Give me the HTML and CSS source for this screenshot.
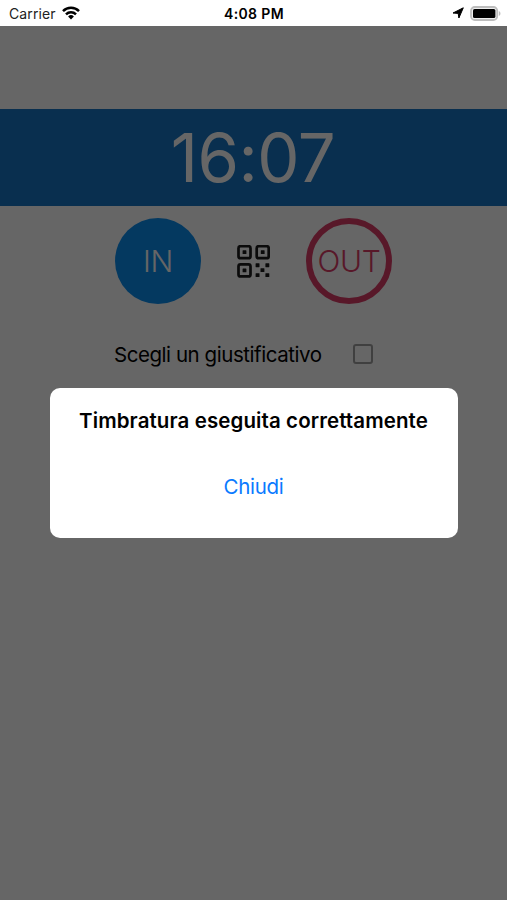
FILE: index.html
```html
<!DOCTYPE html>
<html lang="it">
	<head>
		<meta charset="UTF-8" />
		<meta name="viewport" content="width=device-width, initial-scale=1.0" />
		<title>Timbratura</title>
		<link rel="stylesheet" href="styles.css">
	</head>
	<body>
		<header class="status-bar">
			<div class="status-left">
				<span class="carrier">Carrier</span>
				<svg class="wifi" width="18" height="14" viewBox="0 0 18 14">
					<g fill="none" stroke="#000" stroke-width="2.5">
						<path d="M1 5.1a11.3 11.3 0 0 1 16 0" />
						<path d="M4 8.3a7.1 7.1 0 0 1 10 0" />
					</g>
					<path d="M6.1 10.4a4.1 4.1 0 0 1 5.8 0L9 13.6z" />
				</svg>
			</div>
			<div class="status-time">4:08 PM</div>
			<div class="status-right">
				<svg width="12" height="12" viewBox="0 0 12 12">
					<path d="M11.3.8 6.9 11 6.2 6.4 1 6z" stroke="#000" stroke-linejoin="round" />
				</svg>
				<svg width="31" height="15" viewBox="0 0 31 15">
					<rect x="1" y="1" width="26.2" height="13" rx="3.8" fill="#eee" stroke="#bdbdbd" stroke-width="1.8" />
					<rect x="3" y="3" width="22.4" height="9" rx="1.6" />
					<path d="M28.8 5v5c2.2-.7 2.2-4.3 0-5z" fill="#bdbdbd" />
				</svg>
			</div>
		</header>

		<main class="screen">
			<div class="clock"><span>16:07</span></div>

			<div class="actions">
				<button class="round in">IN</button>
				<svg class="qr" width="33" height="33" viewBox="0 0 33 33" fill="#1c1c1c">
					<g fill="none" stroke="#1c1c1c" stroke-width="2.7">
						<rect x="1.5" y="1.2" width="12" height="12" rx="2" />
						<rect x="19.7" y="1.2" width="12" height="12" rx="2" />
						<rect x="1.5" y="19.4" width="12" height="12" rx="2" />
					</g>
					<rect x="5.6" y="5.3" width="3.8" height="3.8" rx=".4" />
					<rect x="23.8" y="5.3" width="3.8" height="3.8" rx=".4" />
					<rect x="5.6" y="23.5" width="3.8" height="3.8" rx=".4" />
					<rect x="18.6" y="18.3" width="3.9" height="3.9" rx=".4" />
					<rect x="28.4" y="18.3" width="3.9" height="3.9" rx=".4" />
					<rect x="23.5" y="23.2" width="3.9" height="3.9" rx=".4" />
					<rect x="18.6" y="28.2" width="3.9" height="3.9" rx=".4" />
					<rect x="28.4" y="28.2" width="3.9" height="3.9" rx=".4" />
				</svg>
				<button class="round out">OUT</button>
			</div>

			<div class="reason">
				<span class="reason-label">Scegli un giustificativo</span>
				<span class="checkbox"></span>
			</div>

			<div class="overlay">
				<div class="dialog">
					<h3>Timbratura eseguita correttamente</h3>
					<button class="close">Chiudi</button>
				</div>
			</div>
		</main>
	</body>
</html>
```

FILE: styles.css
```css
body {
	margin: 0;
	height: 900px;
	display: flex;
	flex-direction: column;
	overflow: hidden;
	background-color: white;
	color: black;
	font-family: Inter, "Liberation Sans", sans-serif;
}
button {
	margin: 0;
	padding: 0;
	border: none;
	background: none;
	font-family: inherit;
	cursor: pointer;
}
.status-bar {
	height: 25.5px;
	flex: none;
	display: grid;
	grid-template-columns: 1fr auto 1fr;
	align-items: center;
	padding: 1px 6px 0 9px;
	box-sizing: border-box;
	font-size: 14px;
}
.status-left {
	display: flex;
	align-items: center;
	gap: 6px;
}
.carrier {
	color: #222;
	letter-spacing: 0.1px;
}
.status-time {
	padding: 1px 2px 0 0;
	font-weight: 600;
	font-size: 14px;
	letter-spacing: 0.35px;
}
.status-right {
	display: flex;
	justify-content: flex-end;
	align-items: center;
	gap: 6px;
}
.screen {
	position: relative;
	flex: 1;
	padding-top: 83px;
	box-sizing: border-box;
}
.clock {
	height: 97.5px;
	display: flex;
	justify-content: center;
	align-items: center;
	padding-right: 1px;
	background-color: #1777c6;
	color: white;
	font-size: 67px;
	font-weight: 400;
	letter-spacing: -0.5px;
}
.actions {
	display: flex;
	justify-content: center;
	align-items: center;
	gap: 36px;
	padding-top: 12px;
}
.round {
	width: 86px;
	height: 86px;
	box-sizing: border-box;
	border-radius: 50%;
	font-size: 30px;
	font-weight: 300;
	letter-spacing: -0.3px;
}
.in {
	background-color: #0c8ef0;
	color: white;
}
.out {
	border: 6px solid #dc3e68;
	color: #dc3e68;
}
.reason {
	display: flex;
	align-items: center;
	justify-content: space-between;
	width: 259px;
	margin: 38px 0 0 114px;
}
.reason-label {
	padding-top: 2px;
	font-size: 20.5px;
	line-height: 22px;
	letter-spacing: -0.45px;
}
.checkbox {
	width: 20px;
	height: 20px;
	box-sizing: border-box;
	border: 2px solid #a0a0a0;
	border-radius: 3px;
}
.overlay {
	position: absolute;
	top: 0;
	left: 0;
	width: 100%;
	height: 100%;
	background-color: rgba(0, 0, 0, 0.6);
}
.dialog {
	display: flex;
	flex-direction: column;
	align-items: center;
	width: 408px;
	height: 150px;
	margin: 362px auto 0;
	padding-top: 20px;
	box-sizing: border-box;
	border-radius: 10px;
	background-color: white;
}
.dialog h3 {
	margin: 0;
	font-size: 20.5px;
	font-weight: 600;
	line-height: 25px;
	letter-spacing: 0.1px;
	white-space: nowrap;
}
.close {
	margin-top: 41px;
	color: #0a7aff;
	font-size: 20.5px;
	line-height: 25px;
	letter-spacing: -0.3px;
}
```
